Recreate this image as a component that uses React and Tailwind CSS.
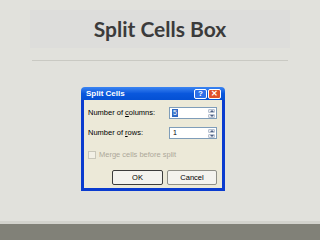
import React from 'react';

function Spinner({ value, selected }) {
  return (
    <div className="flex h-[12px] w-[48px] border border-[#7f9db9] bg-white">
      <div className="flex flex-1 items-center pl-[2px]">
        <span
          className={
            selected
              ? 'bg-[#316ac5] px-px text-[7px] leading-[8px] text-white'
              : 'px-px text-[7px] leading-[8px] text-black'
          }
        >
          {value}
        </span>
      </div>
      <div className="flex w-[9px] flex-col gap-px p-px">
        <div className="flex flex-1 items-center justify-center rounded-[1px] border border-[#b8c2d0] bg-[#e8ebf2]">
          <div className="h-0 w-0 border-x-[2px] border-b-[2px] border-x-transparent border-b-[#4d6185]" />
        </div>
        <div className="flex flex-1 items-center justify-center rounded-[1px] border border-[#b8c2d0] bg-[#e8ebf2]">
          <div className="h-0 w-0 border-x-[2px] border-t-[2px] border-x-transparent border-t-[#4d6185]" />
        </div>
      </div>
    </div>
  );
}

function SplitCellsDialog() {
  return (
    <div
      className="w-[144px] text-[7.5px] text-black"
      style={{ fontFamily: '"Liberation Sans", Arial, sans-serif' }}
    >
      <div className="flex h-[13px] items-center justify-between rounded-t-[4px] bg-gradient-to-b from-[#3a84f2] via-[#0a58dd] to-[#0450d4] pl-[5px] pr-[4px]">
        <span className="text-[8px] font-bold text-white">Split Cells</span>
        <div className="flex gap-px">
          <div className="flex h-[10px] w-[13px] items-center justify-center rounded-[2px] border border-white bg-[#2d6fe8] text-[8px] font-bold leading-none text-white">
            ?
          </div>
          <div className="flex h-[10px] w-[13px] items-center justify-center rounded-[2px] border border-white bg-[#e0512b] text-[8px] font-bold leading-none text-white">
            ✕
          </div>
        </div>
      </div>
      <div className="flex flex-col border-x-[3px] border-b-[3px] border-[#0a3bcf] bg-[#ece9d8] pb-[3px] pl-[4px] pr-[5px] pt-[7px]">
        <div className="flex items-center justify-between">
          <span>
            Number of <span className="underline">c</span>olumns:
          </span>
          <Spinner value="5" selected />
        </div>
        <div className="mt-[8px] flex items-center justify-between">
          <span>
            Number of <span className="underline">r</span>ows:
          </span>
          <Spinner value="1" />
        </div>
        <div className="mt-[10px] flex items-center gap-[3px] text-[#aca899]">
          <div className="h-[8px] w-[8px] border border-[#c9c7ba] bg-[#f2f0e6]" />
          <span>Merge cells before split</span>
        </div>
        <div className="mt-[10px] flex justify-end gap-[4px]">
          <div className="flex h-[15px] w-[51px] items-center justify-center rounded-[2px] border border-[#3c3c3c] bg-[#f4f3ee]">
            OK
          </div>
          <div className="flex h-[15px] w-[50px] items-center justify-center rounded-[2px] border border-[#8f8f87] bg-[#f4f3ee]">
            Cancel
          </div>
        </div>
      </div>
    </div>
  );
}

export default function App() {
  return (
    <div className="flex h-[240px] w-[320px] flex-col overflow-hidden bg-[#e1e1dc]">
      <div className="mx-[30px] mt-[10px] flex h-[38px] items-center justify-center bg-[#dddddb]">
        <h1
          className="text-[21px] font-bold text-[#3b3b3b]"
          style={{ fontFamily: 'Lato, "Open Sans", sans-serif' }}
        >
          Split Cells Box
        </h1>
      </div>
      <div className="mx-[32px] mt-[12px] h-px bg-[#c9c9c3]" />
      <div className="ml-[81px] mt-[26px]">
        <SplitCellsDialog />
      </div>
      <div className="flex-1" />
      <div className="h-[3px] bg-[#d3d3cd]" />
      <div className="h-[16px] bg-[#818178]" />
    </div>
  );
}
